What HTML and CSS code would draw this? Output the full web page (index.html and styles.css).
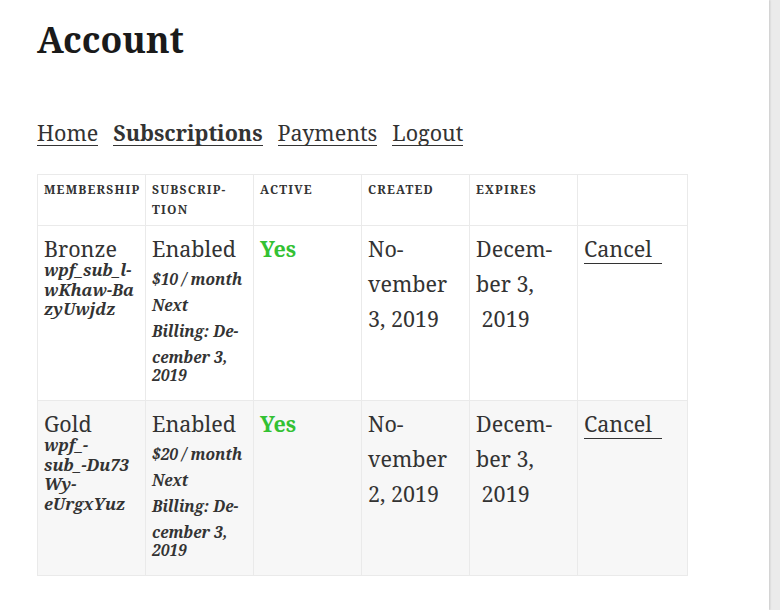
FILE: index.html
```html
<!DOCTYPE html>
<html lang="en">
<head>
    <meta charset="UTF-8">
    <meta name="viewport" content="width=device-width, initial-scale=1.0">
    <title>Account</title>
    <link rel="stylesheet" href="styles.css">
</head>
<body>
<div class="page">
    <h1>Account</h1>
    <nav class="account-nav">
        <a href="#">Home</a>
        <a href="#" class="current">Subscriptions</a>
        <a href="#">Payments</a>
        <a href="#">Logout</a>
    </nav>

    <table class="subs">
        <thead>
            <tr>
                <th>Membership</th>
                <th>Subscrip-<br>tion</th>
                <th>Active</th>
                <th>Created</th>
                <th>Expires</th>
                <th></th>
            </tr>
        </thead>
        <tbody>
            <tr>
                <td>
                    <div class="name">Bronze</div>
                    <div class="sub-id">wpf_sub_l-<br>wKhaw-Ba<br>zyUwjdz</div>
                </td>
                <td>
                    <div class="name">Enabled</div>
                    <div class="billing">$10 / month<br>Next<br>Billing: De-<br>cember 3,</div>
                    <div class="billing last">2019</div>
                </td>
                <td><span class="yes">Yes</span></td>
                <td>No-<br>vember<br>3, 2019</td>
                <td>Decem-<br>ber 3,<br>&nbsp;2019</td>
                <td><a href="#" class="cancel">Cancel</a></td>
            </tr>
            <tr>
                <td>
                    <div class="name">Gold</div>
                    <div class="sub-id">wpf_-<br>sub_-Du73<br>Wy-<br>eUrgxYuz</div>
                </td>
                <td>
                    <div class="name">Enabled</div>
                    <div class="billing">$20 / month<br>Next<br>Billing: De-<br>cember 3,</div>
                    <div class="billing last">2019</div>
                </td>
                <td><span class="yes">Yes</span></td>
                <td>No-<br>vember<br>2, 2019</td>
                <td>Decem-<br>ber 3,<br>&nbsp;2019</td>
                <td><a href="#" class="cancel">Cancel</a></td>
            </tr>
        </tbody>
    </table>
</div>
</body>
</html>
```

FILE: styles.css
```css
body {
    margin: 0;
    background-color: #ebebeb;
    font-family: "Noto Serif", "DejaVu Serif", serif;
    color: #333;
}
.page {
    width: 769px;
    min-height: 610px;
    background: #fff;
    box-shadow: 1px 0 2px rgba(0, 0, 0, 0.15);
    padding: 0 0 20px 37px;
    box-sizing: border-box;
}
h1 {
    margin: 0;
    padding-top: 18px;
    font-size: 35.5px;
    line-height: 1.2;
    font-weight: 700;
    color: #1a1a1a;
}
.account-nav {
    display: flex;
    gap: 15px;
    margin-top: 59px;
    font-size: 21.5px;
    line-height: 1.2;
}
.account-nav a {
    color: #333;
    text-decoration: none;
    border-bottom: 1px solid #333;
}
.account-nav a.current {
    font-weight: 700;
}
.subs {
    margin-top: 28px;
    width: 650px;
    table-layout: fixed;
    border-collapse: collapse;
    border: 1px solid #eaeaea;
}
.subs th,
.subs td {
    border: 1px solid #eaeaea;
    padding: 5px 6px;
    text-align: left;
    vertical-align: top;
    width: 95px;
}
.subs th:last-child,
.subs td:last-child {
    width: 97px;
}
.subs th {
    font-size: 12px;
    line-height: 20px;
    font-weight: 700;
    letter-spacing: 0.1em;
    text-transform: uppercase;
    height: 40px;
}
.subs td {
    font-size: 21.5px;
    line-height: 35px;
    padding-bottom: 16px;
}
.subs tbody tr:nth-child(even) td {
    background: #f7f7f7;
}
.sub-id {
    margin-top: -6px;
    font-size: 16.5px;
    line-height: 19.5px;
    font-weight: 700;
    font-style: italic;
}
.billing {
    font-size: 15.5px;
    line-height: 26px;
    font-weight: 700;
    font-style: italic;
}
.billing.last {
    margin-top: -4px;
    line-height: 18px;
}
.yes {
    color: #33c133;
    font-weight: 700;
}
.cancel {
    color: #333;
    text-decoration: none;
    border-bottom: 1px solid #333;
    padding-right: 10px;
}
```
